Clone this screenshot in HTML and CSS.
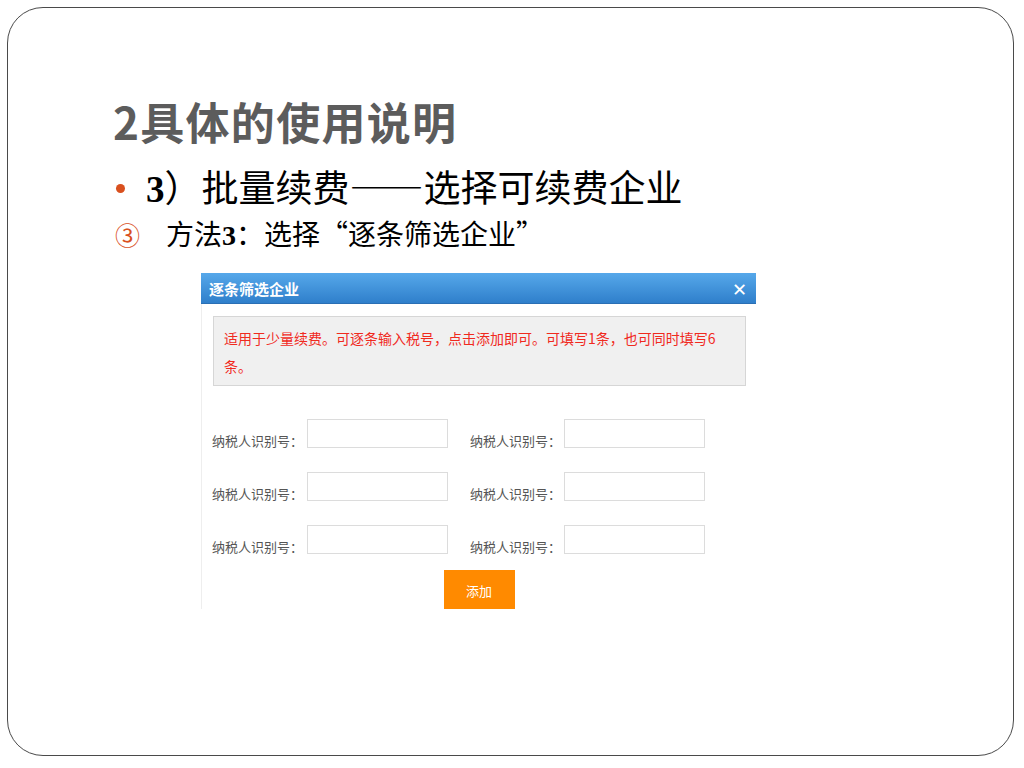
FILE: index.html
```html
<!DOCTYPE html>
<html lang="zh-CN">
<head>
    <meta charset="UTF-8">
    <title>2具体的使用说明</title>
    <link rel="stylesheet" href="styles.css">
</head>
<body>
    <div class="slide">
        <h1 class="slide-title">2具体的使用说明</h1>
        <div class="bullet">
            <span class="dot"></span>
            <span class="bullet-text"><span class="num">3</span>）批量续费——选择可续费企业</span>
        </div>
        <div class="step">
            <span class="step-mark">③</span>
            <span class="step-text">方法<span class="num">3</span>：选择“逐条筛选企业”</span>
        </div>
        <div class="dialog">
            <div class="dialog-head">
                <span>逐条筛选企业</span>
                <span class="close">&#x2715;</span>
            </div>
            <div class="dialog-body">
                <div class="notice">适用于少量续费。可逐条输入税号，点击添加即可。可填写1条，也可同时填写6条。</div>
                <div class="form-grid">
                    <label class="field-label">纳税人识别号：</label><input class="field" type="text">
                    <label class="field-label">纳税人识别号：</label><input class="field" type="text">
                    <label class="field-label">纳税人识别号：</label><input class="field" type="text">
                    <label class="field-label">纳税人识别号：</label><input class="field" type="text">
                    <label class="field-label">纳税人识别号：</label><input class="field" type="text">
                    <label class="field-label">纳税人识别号：</label><input class="field" type="text">
                </div>
                <div class="actions">
                    <button class="add-btn">添加</button>
                </div>
            </div>
        </div>
    </div>
</body>
</html>
```

FILE: styles.css
```css
body {
    margin: 0;
    padding: 0;
    background-color: #fff;
    font-family: "Noto Sans CJK SC", sans-serif;
}
.slide {
    margin: 7px;
    width: 1007px;
    height: 749px;
    box-sizing: border-box;
    border: 1.5px solid #4a4a4a;
    border-radius: 36px;
    padding: 87px 0 0 105px;
    overflow: hidden;
}
.slide-title {
    margin: 0;
    font-size: 44px;
    line-height: 52px;
    font-weight: 700;
    color: #5c5c5c;
    letter-spacing: 1.3px;
}
.bullet {
    display: flex;
    align-items: center;
    margin-top: 19px;
    height: 44px;
}
.dot {
    width: 9px;
    height: 9px;
    border-radius: 50%;
    background-color: #d9501e;
    margin-left: 3px;
    margin-right: 21px;
}
.bullet-text {
    font-size: 37px;
    line-height: 44px;
    color: #000;
}
.num {
    font-family: "Liberation Serif", serif;
    font-weight: 700;
}
.step {
    display: flex;
    align-items: center;
    margin-top: 6px;
    height: 36px;
}
.step-mark {
    width: 24px;
    font-size: 25px;
    line-height: 36px;
    color: #d9501e;
    margin-left: 2px;
    margin-right: 27px;
}
.step-text {
    font-size: 28px;
    line-height: 36px;
    color: #000;
}
.dialog {
    margin-top: 21px;
    margin-left: 88px;
    width: 555px;
    height: 336px;
    overflow: hidden;
    background-color: #fff;
}
.dialog-head {
    height: 31px;
    display: flex;
    align-items: center;
    justify-content: space-between;
    padding: 0 9px 0 8px;
    background: linear-gradient(#56a8ea, #2f7fcb);
    border-bottom: 1px solid #2a6fb4;
    box-sizing: border-box;
    color: #fff;
    font-size: 15px;
    font-weight: 700;
}
.close {
    font-size: 18px;
    font-weight: 400;
}
.dialog-body {
    border-left: 1px solid #eee;
    padding: 12px 10px 0 10px;
    height: 305px;
}
.notice {
    background-color: #f0f0f0;
    border: 1px solid #d6d6d6;
    padding: 7px 10px 5px 10px;
    margin: 0 0 0 1px;
    color: #f02a1e;
    font-size: 14px;
    line-height: 28px;
}
.form-grid {
    display: grid;
    grid-template-columns: 95px 141px 116px 141px;
    grid-auto-rows: 29px;
    row-gap: 24px;
    margin-top: 33px;
    align-items: end;
}
.field-label {
    font-size: 13px;
    color: #555;
    line-height: 18px;
    margin-bottom: -2px;
}
.field-label:nth-of-type(2n) {
    padding-left: 22px;
}
.field {
    height: 29px;
    box-sizing: border-box;
    border: 1px solid #dcdcdc;
    margin: 0;
    padding: 0 6px;
}
.actions {
    display: flex;
    justify-content: center;
    margin-top: 16px;
}
.add-btn {
    width: 71px;
    height: 40px;
    border: none;
    background-color: #ff8a00;
    color: #fff;
    font-family: "Noto Sans CJK SC", sans-serif;
    font-size: 13px;
}
```
